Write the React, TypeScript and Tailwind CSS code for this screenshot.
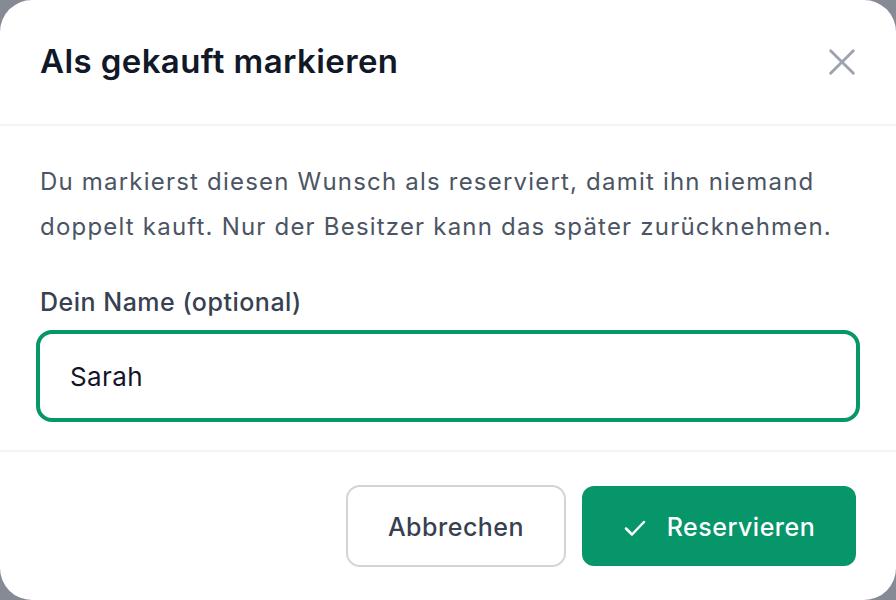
import React from "react";

export default function App() {
  return (
    <div className="w-[896px] h-[600px] bg-[#868a94]" style={{ fontFamily: "Inter, 'Noto Sans', sans-serif" }}>
      <div className="w-full h-full bg-white rounded-[32px] flex flex-col">
        <div className="h-[124px] shrink-0 pl-10 pr-[36px] flex items-center justify-between">
          <h2 className="text-[33px] font-semibold text-[#111827] tracking-[0.4px]">Als gekauft markieren</h2>
          <button className="w-[36px] h-[36px] flex items-center justify-center text-[#9ca3af]">
            <svg width="34" height="34" viewBox="0 0 24 24" fill="none" stroke="currentColor" strokeWidth="2" strokeLinecap="round">
              <path d="M4 4l16 16M20 4L4 20" />
            </svg>
          </button>
        </div>
        <div className="h-[2px] bg-[#f3f4f6]" />
        <div className="flex-1 px-9 pt-[33px] pb-[28px] flex flex-col">
          <p className="px-1 text-[24px] leading-[45px] tracking-[1.2px] text-[#4b5563]">
            Du markierst diesen Wunsch als reserviert, damit ihn niemand doppelt kauft. Nur der Besitzer kann das später zurücknehmen.
          </p>
          <label className="px-1 mt-[37px] text-[25px] leading-[32px] font-medium tracking-[0.5px] text-[#374151]">Dein Name (optional)</label>
          <div className="mt-[12px] h-[92px] border-[4px] border-[#059669] rounded-[16px] flex items-center pl-[30px] text-[26px] tracking-[0.4px] text-[#14142b]">
            Sarah
          </div>
        </div>
        <div className="h-[2px] bg-[#f3f4f6]" />
        <div className="h-[148px] shrink-0 pr-10 flex items-center justify-end gap-4">
          <button className="w-[220px] h-[82px] pt-[3px] border-2 border-[#d1d5db] rounded-[14px] text-[25px] font-medium tracking-[0.5px] text-[#374151]">
            Abbrechen
          </button>
          <button className="w-[274px] h-[80px] pt-[3px] bg-[#07966a] rounded-[12px] text-[25px] font-medium tracking-[0.5px] text-white flex items-center justify-center gap-[18px]">
            <svg width="24" height="24" viewBox="0 0 24 24" fill="none" stroke="currentColor" strokeWidth="2.5" strokeLinecap="round" strokeLinejoin="round">
              <path d="M3 12.5l6 6L21 6" />
            </svg>
            <span className="ml-[2px]">Reservieren</span>
          </button>
        </div>
      </div>
    </div>
  );
}
